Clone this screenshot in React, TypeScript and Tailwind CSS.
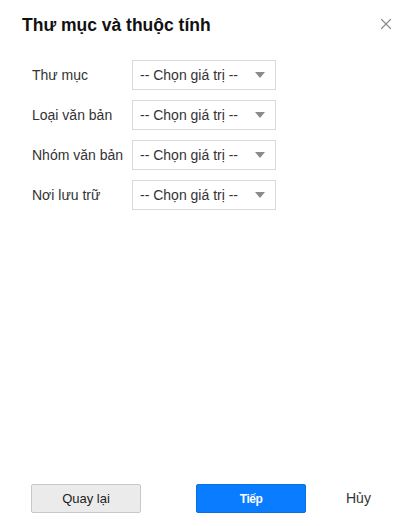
import { X } from "lucide-react";

const fields = ["Thư mục", "Loại văn bản", "Nhóm văn bản", "Nơi lưu trữ"];

const SelectBox = () => (
  <div className="flex h-[30px] w-[144px] items-center justify-between border border-[#d9d9d9] bg-white pl-[7px] pr-[10px] text-[14px] text-[#333]">
    <span>-- Chọn giá trị --</span>
    <span className="h-0 w-0 border-x-[5.5px] border-t-[6px] border-x-transparent border-t-[#8a8a8a]" />
  </div>
);

export default function App() {
  return (
    <div className="flex h-[526px] w-[415px] flex-col bg-white font-['Liberation_Sans',Arial,sans-serif] text-[#222]">
      <div className="flex items-start justify-between pl-[22px] pr-[20px] pt-[13px]">
        <h2 className="text-[17.5px] font-bold leading-[24px] text-[#111]">
          Thư mục và thuộc tính
        </h2>
        <X className="mt-[2px] h-[18px] w-[18px] text-[#8c8c8c]" strokeWidth={1.6} />
      </div>
      <div className="mt-[23px] flex flex-col gap-[10px] pl-[32px]">
        {fields.map((f) => (
          <div key={f} className="flex items-center">
            <span className="w-[100px] text-[14px] text-[#333]">{f}</span>
            <SelectBox />
          </div>
        ))}
      </div>
      <div className="mt-auto flex items-center pb-[13px] pl-[31px]">
        <button className="h-[29px] w-[110px] rounded-[2px] border border-[#c8c8c8] bg-[#ebebeb] text-[13px] text-[#222]">
          Quay lại
        </button>
        <button className="ml-[55px] h-[29px] w-[110px] rounded-[2px] border border-[#0a6fe0] bg-[#0a7cff] text-[12px] font-bold tracking-[-0.5px] text-white">
          Tiếp
        </button>
        <span className="ml-[40px] text-[14px] text-[#333]">Hủy</span>
      </div>
    </div>
  );
}
